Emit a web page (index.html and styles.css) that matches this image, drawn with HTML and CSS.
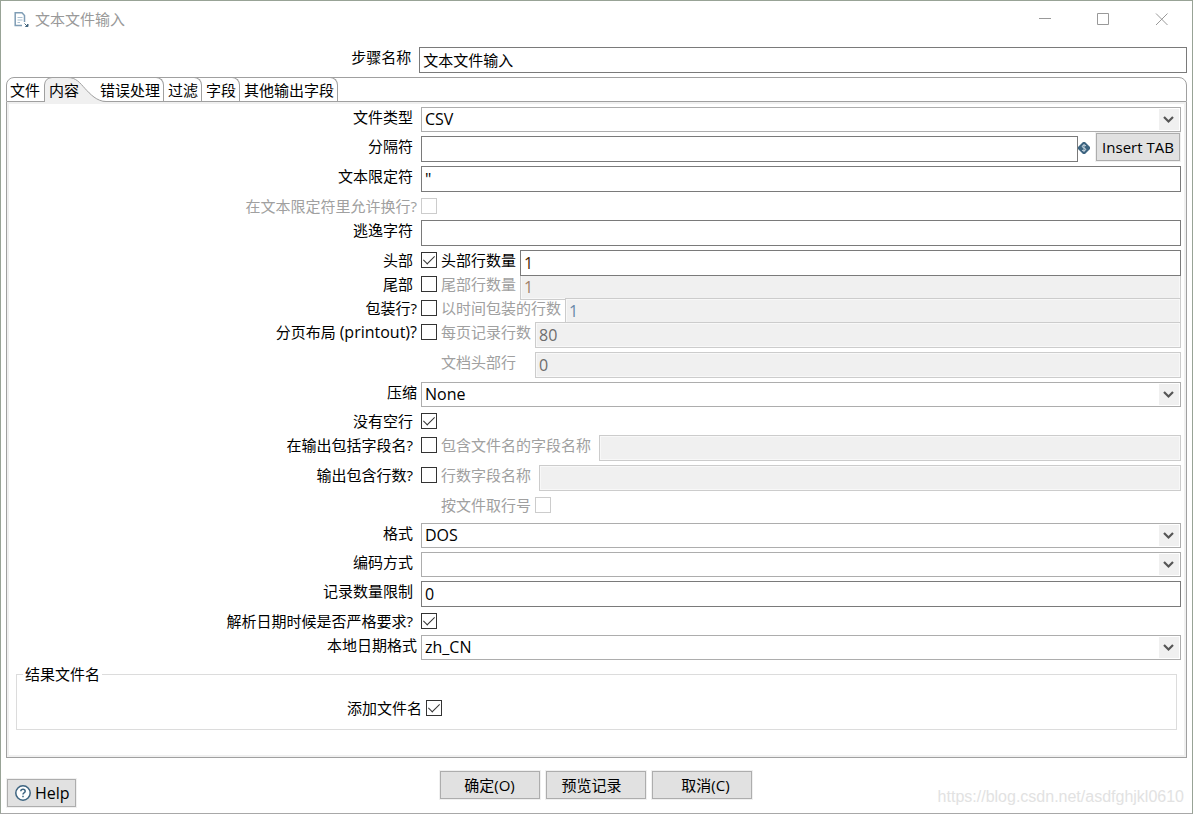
FILE: index.html
```html
<!DOCTYPE html>
<html lang="zh-CN">
<head>
<meta charset="utf-8">
<title>文本文件输入</title>
<link rel="stylesheet" href="styles.css">
</head>
<body>
<svg class="defs" width="0" height="0" aria-hidden="true">
  <symbol id="chevron" viewBox="0 0 20 21"><path d="M5 8l4.500 4.500L14 8" fill="none" stroke="#555" stroke-width="2.200"/></symbol>
</svg>
<div class="window">
  <header class="titlebar">
    <svg class="app-icon" width="16" height="16" viewBox="0 0 16 16" fill="none" stroke="#7f9db5">
      <path d="M10.500 10V3.500L8 .8H1.200V13.500H8" stroke-width="1.500"/>
      <path d="M3.500 5.500h5M3.500 8h5M3.500 10.500h2.500" stroke="#a9bfd0"/>
      <path d="M10.500 11.500l2.500 2.500M14 12v2.500h-2.500z" fill="#44667f" stroke="#44667f"/>
    </svg>
    <h1 class="title">文本文件输入</h1>
    <div class="window-controls">
      <button class="wc" type="button" aria-label="最小化"><svg width="13" height="13" viewBox="0 0 13 13"><path d="M0 5.500h12"/></svg></button>
      <button class="wc" type="button" aria-label="最大化"><svg width="13" height="13" viewBox="0 0 13 13"><path d="M.5.5h11v11H.5z"/></svg></button>
      <button class="wc" type="button" aria-label="关闭"><svg width="13" height="13" viewBox="0 0 13 13"><path d="M1 .5l11.500 11.500M12.500 .5L1 12"/></svg></button>
    </div>
  </header>

  <div class="step-row">
    <label class="label" for="step">步骤名称</label>
    <input class="text cjk" id="step" type="text" value="文本文件输入">
  </div>

  <div class="tabs" role="tablist">
    <button class="tab first" role="tab" type="button">文件</button>
    <button class="tab selected" role="tab" type="button" aria-selected="true">
      <svg class="tab-shape" width="64" height="26" viewBox="0 0 64 26"><path d="M1 26V8Q1 1 8 .5H24C32 .5 36 6 41 11.500S53 24.500 62 24.500V26z" fill="#f0f0f0"/><path d="M.5 25V8Q1 1 8 .5H24C32 .5 36 6 41 11.500S53 24.500 62 24.500H64" fill="none" stroke="#a0a0a0"/></svg>
      <span class="tab-text">内容</span>
    </button>
    <button class="tab" role="tab" type="button">错误处理</button>
    <button class="tab" role="tab" type="button">过滤</button>
    <button class="tab" role="tab" type="button">字段</button>
    <button class="tab" role="tab" type="button">其他输出字段</button>
  </div>

  <main class="panel">
    <div class="row">
      <label class="label" for="type">文件类型</label>
      <div class="combo"><select id="type"><option>CSV</option></select><svg class="arrow"><use href="#chevron"/></svg></div>
    </div>
    <div class="row">
      <label class="label" for="sep">分隔符</label>
      <div class="field">
        <input class="text" id="sep" type="text">
        <svg class="variable" width="12" height="12" viewBox="0 0 12 12"><path d="M5 0h2l5 5v2l-5 5H5L0 7V5z" fill="#3d6480"/><path d="M8 3.800Q6 2.500 4.500 3.700T6 6t1.500 2.200T4 8.300M6 2v8" fill="none" stroke="#c4d3dd"/></svg>
        <button class="btn insert" type="button">Insert TAB</button>
      </div>
    </div>
    <div class="row">
      <label class="label" for="quote">文本限定符</label>
      <input class="text" id="quote" type="text" value="&quot;">
    </div>
    <div class="row check-row">
      <label class="label near off" for="breaks">在文本限定符里允许换行?</label>
      <div class="field"><input class="check" id="breaks" type="checkbox" disabled></div>
    </div>
    <div class="row">
      <label class="label" for="escape">逃逸字符</label>
      <input class="text" id="escape" type="text">
    </div>

    <div class="stack">
      <div class="row check-row">
        <label class="label" for="header">头部</label>
        <div class="field"><input class="check" id="header" type="checkbox" checked><label class="sub" for="header-n">头部行数量</label><input class="text raised warm" id="header-n" type="text" value="1"></div>
      </div>
      <div class="row check-row">
        <label class="label" for="footer">尾部</label>
        <div class="field"><input class="check" id="footer" type="checkbox"><label class="sub off" for="footer-n">尾部行数量</label><input class="text warm" id="footer-n" type="text" value="1" disabled></div>
      </div>
      <div class="row check-row">
        <label class="label near" for="wrap">包装行?</label>
        <div class="field"><input class="check" id="wrap" type="checkbox"><label class="sub off" for="wrap-n">以时间包装的行数</label><input class="text cool" id="wrap-n" type="text" value="1" disabled></div>
      </div>
      <div class="row check-row">
        <label class="label near" for="paged">分页布局 <span class="latin">(printout)?</span></label>
        <div class="field"><input class="check" id="paged" type="checkbox"><label class="sub off" for="paged-n">每页记录行数</label><input class="text" id="paged-n" type="text" value="80" disabled></div>
      </div>
    </div>

    <div class="row">
      <div class="field indent"><label class="sub off wide" for="doc-n">文档头部行</label><input class="text" id="doc-n" type="text" value="0" disabled></div>
    </div>
    <div class="row">
      <label class="label near" for="zip">压缩</label>
      <div class="combo"><select id="zip"><option>None</option></select><svg class="arrow"><use href="#chevron"/></svg></div>
    </div>
    <div class="row check-row">
      <label class="label" for="noempty">没有空行</label>
      <div class="field"><input class="check" id="noempty" type="checkbox" checked></div>
    </div>
    <div class="row check-row">
      <label class="label" for="fname">在输出包括字段名?</label>
      <div class="field"><input class="check" id="fname" type="checkbox"><label class="sub off roomy" for="fname-t">包含文件名的字段名称</label><input class="text" id="fname-t" type="text" disabled></div>
    </div>
    <div class="row check-row">
      <label class="label" for="rownum">输出包含行数?</label>
      <div class="field"><input class="check" id="rownum" type="checkbox"><label class="sub off roomy" for="rownum-t">行数字段名称</label><input class="text" id="rownum-t" type="text" disabled></div>
    </div>
    <div class="row check-row spaced">
      <div class="field indent"><label class="sub off" for="byfile">按文件取行号</label><input class="check" id="byfile" type="checkbox" disabled></div>
    </div>
    <div class="row">
      <label class="label" for="format">格式</label>
      <div class="combo"><select id="format"><option>DOS</option></select><svg class="arrow"><use href="#chevron"/></svg></div>
    </div>
    <div class="row">
      <label class="label" for="encoding">编码方式</label>
      <div class="combo"><select id="encoding"><option></option></select><svg class="arrow"><use href="#chevron"/></svg></div>
    </div>
    <div class="row">
      <label class="label" for="limit">记录数量限制</label>
      <input class="text" id="limit" type="text" value="0">
    </div>
    <div class="row check-row">
      <label class="label" for="strict">解析日期时候是否严格要求?</label>
      <div class="field"><input class="check" id="strict" type="checkbox" checked></div>
    </div>
    <div class="row">
      <label class="label near" for="locale">本地日期格式</label>
      <div class="combo"><select id="locale"><option>zh_CN</option></select><svg class="arrow"><use href="#chevron"/></svg></div>
    </div>

    <fieldset class="group">
      <legend>结果文件名</legend>
      <div class="row check-row group-row">
        <label class="label near" for="addname">添加文件名</label>
        <div class="field"><input class="check" id="addname" type="checkbox" checked></div>
      </div>
    </fieldset>
  </main>

  <footer class="footer">
    <button class="btn help" type="button">
      <svg width="16" height="16" viewBox="0 0 16 16" fill="none" stroke="#3d6480"><circle cx="8" cy="8" r="7.200" stroke-width="1.500" fill="#fff"/><path d="M5.800 6.300Q5.900 4.300 8 4.300T10.200 6.200Q10.200 7.200 9 7.900 8 8.500 8 9.600M8 10.800v1.500" stroke-width="1.500"/></svg>
      Help
    </button>
    <div class="actions">
      <button class="btn action" type="button">确定(O)</button>
      <button class="btn action trail" type="button">预览记录</button>
      <button class="btn action lead" type="button">取消(C)</button>
    </div>
    <span class="watermark">https://blog.csdn.net/asdfghjkl0610</span>
  </footer>
</div>
</body>
</html>
```
FILE: styles.css
```css
* { box-sizing: border-box; }
body {
  margin: 0;
  background: #fff;
  color: #000;
  font: 15px/20px "Open Sans", "Noto Sans CJK SC", sans-serif;
}
button, input, select { font: inherit; color: inherit; margin: 0; }
.defs { position: absolute; }
.window {
  min-height: 100vh;
  display: flex;
  flex-direction: column;
  border: 1px solid #98a396;
  border-bottom-color: #a8a8a8;
}

/* Title bar */
.titlebar { display: flex; align-items: flex-start; height: 46px; padding: 6px 2px 0 13px; }
.app-icon { margin-top: 5px; }
.title { flex: 1; margin: 2px 0 0 5px; font-size: 15px; font-weight: 400; color: #999; }
.window-controls { display: flex; }
.wc { width: 58px; height: 24px; padding: 0; border: 0; background: none; display: flex; align-items: center; justify-content: center; }
.wc svg { fill: none; stroke: #999; }

.step-row { display: grid; grid-template-columns: 35% 1fr; margin: 0 5px 4px; }

/* Tabs */
.tabs {
  display: flex;
  height: 25px;
  margin: 0 5px;
  border: 1px solid #a0a0a0;
  border-radius: 8px 8px 0 0;
}
.tab {
  height: 24px;
  margin-top: -1px;
  padding: 0 3px 0 4px;
  border: 1px solid #a0a0a0;
  border-width: 1px 1px 0 0;
  border-radius: 0 8px 0 0;
  background: none;
  white-space: nowrap;
}
.tab.first { margin-left: -1px; border-color: transparent; }
.tab.selected { position: relative; padding: 0 17px 0 5px; border-color: transparent; border-right: 0; }
.tab-shape { position: absolute; left: 0; top: -1px; }
.tab-text { position: relative; }

/* Panel and form rows */
.panel {
  flex: 1;
  display: flex;
  flex-direction: column;
  gap: 4px;
  margin: 0 5px;
  padding: 5px 5px 0 4px;
  border: 1px solid #a0a0a0;
  border-top: 0;
  box-shadow: inset 0 0 0 2px #f0f0f0;
}
.row { display: grid; grid-template-columns: 41fr 76fr; align-items: start; }
.label { padding-right: 8px; text-align: right; white-space: nowrap; }
.label.near { padding-right: 4px; }
.latin { font-size: 16px; }
.check-row { min-height: 20px; }
.spaced { margin-bottom: 4px; }
.stack { padding-bottom: 2px; }
.stack .row { height: 24px; }
.off { color: #a0a0a0; }
.field { display: flex; align-items: flex-start; min-width: 0; }
.indent { grid-column: 2; padding-left: 20px; }
.sub { margin-right: 4px; white-space: nowrap; }
.field .check + .sub { margin-left: 4px; }
.sub.wide { width: 90px; }
.sub.roomy { margin-right: 8px; }

.text {
  flex: 1;
  min-width: 0;
  width: 100%;
  height: 26px;
  padding: 0 3px;
  border: 1px solid #7a7a7a;
  border-radius: 0;
  background: #fff;
  font-size: 16px;
}
.text.cjk { padding-bottom: 2px; font-size: 15px; }
.text:disabled { border-color: #ccc; background: #f0f0f0; color: #6d6d6d; box-shadow: inset 0 0 0 1px #f8f8f8; }
.raised { position: relative; z-index: 1; }
.text.warm { color: #4a2500; }
.text.warm:disabled { color: #a08068; }
.text.cool:disabled { color: #6888a8; }

.combo { position: relative; }
.combo select {
  display: block;
  appearance: none;
  width: 100%;
  height: 25px;
  padding: 0 24px 1px 3px;
  border: 1px solid #adadad;
  border-radius: 0;
  background: #fff;
  font-size: 16px;
}
.arrow { position: absolute; top: 2px; right: 2px; width: 20px; height: 21px; background: #f0f0f0; pointer-events: none; }

.check {
  appearance: none;
  flex: none;
  display: grid;
  place-items: center;
  width: 16px;
  height: 16px;
  margin-top: 2px;
  border: 1px solid #333;
  background: #fff;
}
.check:disabled { border-color: #ccc; }
.check:checked::before {
  content: "";
  width: 5px;
  height: 10px;
  margin-bottom: 3px;
  border: solid #333;
  border-width: 0 1px 1px 0;
  transform: rotate(45deg);
}

.btn {
  height: 28px;
  padding: 0 4px;
  border: 1px solid #adadad;
  background: #e1e1e1;
  box-shadow: 0 0 0 1px #f0f0f0;
  white-space: nowrap;
}
.variable { margin-top: 6px; }
.insert { width: 84px; margin: -3px 1px -3px 6px; }

.group { margin: 0 4px 0 5px; padding: 0 0 11px; border: 1px solid #dcdcdc; }
.group legend { margin-left: 6px; padding: 0 2px; }
.group-row { grid-template-columns: 6fr 11fr; margin-top: 14px; }

/* Footer */
.footer { display: grid; grid-template-columns: 1fr auto 1fr; margin-top: 13px; padding: 0 8px 6px 6px; }
.help { justify-self: start; display: flex; align-items: center; gap: 4px; margin-top: 8px; padding: 0 5px 0 7px; font-size: 16px; }
.actions { display: flex; gap: 6px; }
.action { width: 100px; }
.trail { padding-right: 12px; }
.lead { padding-left: 12px; }
.watermark { justify-self: end; align-self: end; color: #e2e2e2; font-family: "Liberation Sans", sans-serif; font-size: 16px; }
```
